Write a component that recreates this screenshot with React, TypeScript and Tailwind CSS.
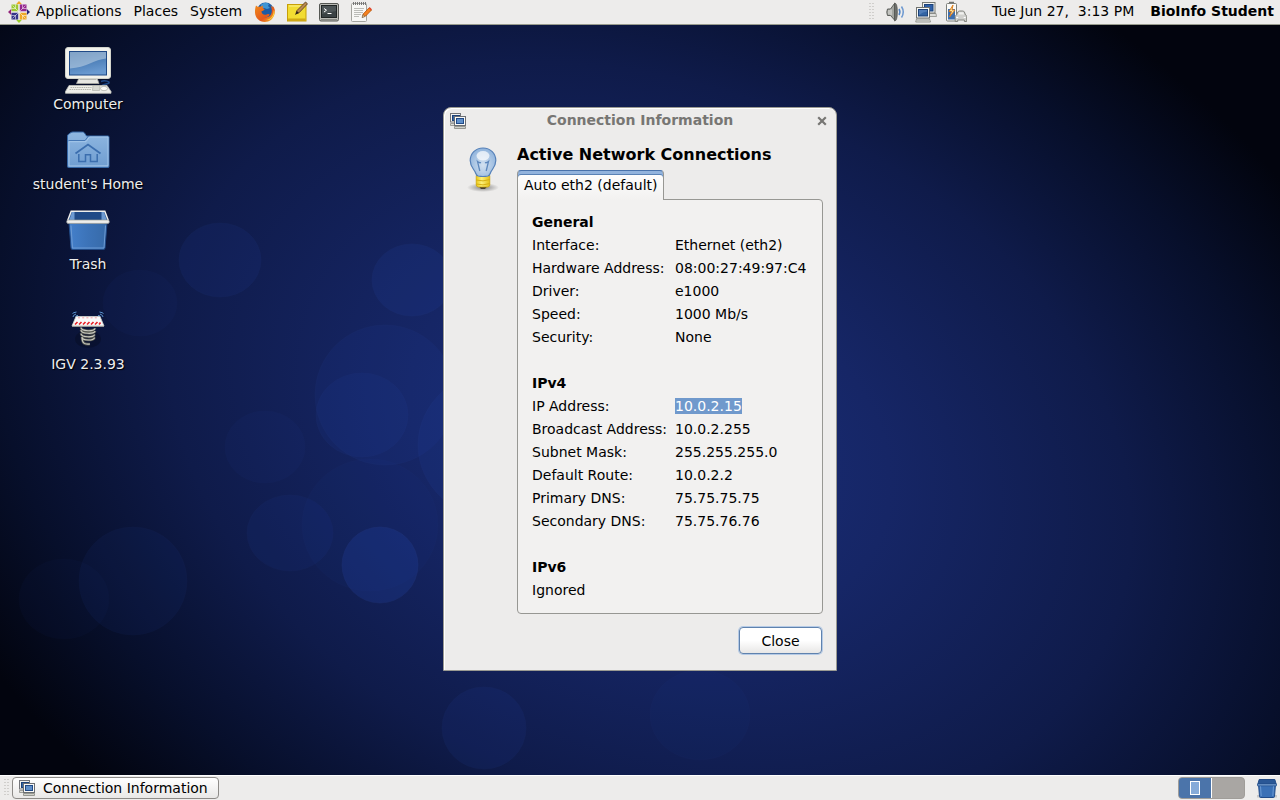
import type { ReactNode } from "react";

function CentosLogo() {
  const quad = (rotate: number, fill: string, dark: string) => (
    <g transform={`rotate(${rotate} 11 11)`}>
      <path d="M11 0 8 3.200h6Z" fill={dark} />
      <path d="M10.500 10.500V3.500H3.500v7Z" fill={fill} />
      <path d="M10.500 10.500 4.500 4.500M7.500 3.500v4h-4" stroke="#fff" strokeWidth=".7" fill="none" opacity=".75" />
    </g>
  );
  return (
    <svg viewBox="0 0 22 22" className="size-[22px]" aria-hidden="true">
      {quad(0, "#9cc832", "#efa724")}
      {quad(90, "#93278f", "#262577")}
      {quad(180, "#efa724", "#9ccd2a")}
      {quad(270, "#35348a", "#932279")}
      <path d="M11 3v16M3 11h16" stroke="#edeceb" strokeWidth="1.200" />
    </svg>
  );
}

function FirefoxIcon() {
  return (
    <svg viewBox="0 0 22 22" className="size-[22px]" aria-hidden="true">
      <defs>
        <linearGradient id="ffFox" x1="0" y1="0" x2="1" y2="1">
          <stop offset="0" stopColor="#f08a1c" />
          <stop offset=".6" stopColor="#e4571b" />
          <stop offset="1" stopColor="#f7c52b" />
        </linearGradient>
      </defs>
      <circle cx="11.500" cy="10" r="8.500" fill="#1c5ba4" />
      <path d="M7 3.500Q11 .5 15 3l-1 2 2 2-3 1-3-1-3 1Z" fill="#3f95d4" />
      <path
        d="M2 4.500 4 6q1.500-.8 3.200-.5L9 4.500 8.700 7l2 1.200-1.500 1.500-1.700.6c0 3 2.500 4 5 3.200 1.500-.5 2.500-.5 3-.1-.5 2-3 2.800-4.500 2.600 4 1 6.500-2 6.800-5.500.2-2.500-.3-4.500-1.300-6l2.500 2-.3-1.800C21 7.500 21.300 10 20.500 13c-1.200 5-5 8-9.700 8C5.500 21 1.200 17 1 11.500.9 8.800 1.300 6.500 2 4.500Z"
        fill="url(#ffFox)"
      />
      <path d="M19.500 9c.7 5-2.500 9.500-7.500 10 5 .8 8.700-3.500 8.500-8.500Z" fill="#fbd33c" />
    </svg>
  );
}

function NotesIcon() {
  return (
    <svg viewBox="0 0 22 22" className="size-[22px]" aria-hidden="true">
      <rect x="1.500" y="3.500" width="18.500" height="16.500" fill="#f2dc32" stroke="#c79f09" />
      <path d="M2 17.500h17.500V20H2Z" fill="#cfa815" />
      <path d="M3 5h15.500" stroke="#fcf08a" />
      <path d="m10 12.500 1-3L19.500 1l2 1.800-8.500 9Z" fill="#b98a52" stroke="#5d4021" strokeWidth=".9" />
      <path d="m9 14 1.800-4 2 1.900Z" fill="#2d2418" />
    </svg>
  );
}

function TerminalIcon() {
  return (
    <svg viewBox="0 0 22 22" className="size-[22px]" aria-hidden="true">
      <rect x="1.500" y="2.500" width="19" height="17.500" rx="1.500" fill="#b9bab5" stroke="#555753" />
      <rect x="3.500" y="4.500" width="15" height="12" fill="#3a4244" stroke="#1f2424" />
      <path d="M4 5h14v5L4 13Z" fill="#5c6668" opacity=".55" />
      <path d="m6 7.500 2.500 1.700L6 11M9.500 12.500h4" stroke="#fff" fill="none" />
      <path d="M3 18.500h16" stroke="#888a85" />
    </svg>
  );
}

function TextEditorIcon() {
  return (
    <svg viewBox="0 0 22 22" className="size-[22px]" aria-hidden="true">
      <rect x="1.500" y="2.500" width="15" height="18" rx="1" fill="#f7f7f5" stroke="#a3a39e" />
      <path d="M3.500 1v3M5.500 1v3M7.500 1v3M9.500 1v3M11.500 1v3M13.500 1v3M15.500 1v3" stroke="#777" />
      <path d="M4 7.500h10M4 9.500h9M4 11.500h9M4 13.500h7M4 15.500h5" stroke="#bbbcb8" />
      <path d="m12.500 16 .7-3 6-6.300 2.400 2.200-6 6.200Z" fill="#f5821f" stroke="#b3520a" strokeWidth=".8" />
      <path d="m12 16.700.9-3.200 2.200 2Z" fill="#e9c896" stroke="#5a4a33" strokeWidth=".5" />
      <path d="m18.800 7.200 1.100-1 2 2-1 1.100Z" fill="#e4432f" />
    </svg>
  );
}

function VolumeIcon() {
  return (
    <svg viewBox="0 0 22 22" className="size-[22px]" aria-hidden="true">
      <path d="M2.500 8h3l4-5.500V19l-4-4.500h-3q-1.500-3.200 0-6.500Z" fill="#a3a5a0" stroke="#5c5e5a" />
      <path d="M6 8.500v5.500M4 9v4.500" stroke="#e5e5e2" />
      <path d="M9.500 2q2.800 0 2.800 9t-2.800 9Z" fill="#6f716d" stroke="#555753" strokeWidth=".8" />
      <path d="M14 8q1.800 3 0 6" stroke="#4f82c2" fill="none" strokeWidth="1.500" />
      <path d="M16.500 5.500q3.500 5.500 0 11" stroke="#6c98d0" fill="none" strokeWidth="1.500" />
    </svg>
  );
}

function NetworkIcon() {
  return (
    <svg viewBox="0 0 22 22" className="size-[22px]" aria-hidden="true">
      <path d="M8 12.500h13l.5 3H8Z" fill="#dededb" stroke="#8b8d88" strokeWidth=".8" />
      <rect x="7.500" y="1.500" width="12.500" height="10.500" fill="#f4f4f2" stroke="#777975" />
      <rect x="9.500" y="3.500" width="8.500" height="6.500" fill="#2f60a8" stroke="#1d4279" />
      <path d="M1.500 18h13l1 3H.7Z" fill="#e4e4e1" stroke="#83857f" strokeWidth=".8" />
      <path d="M2.500 19.500h11" stroke="#999b96" strokeDasharray="1 1" />
      <rect x="1.500" y="6.500" width="13" height="10.500" fill="#f8f8f6" stroke="#70726e" />
      <rect x="3.500" y="8.500" width="9" height="6.500" fill="#3465a4" stroke="#1d4279" />
      <path d="M4 14q4-3.500 8-3.500V9H4Z" fill="#6f98cd" opacity=".5" />
    </svg>
  );
}

function ConnectionIcon() {
  return (
    <svg viewBox="0 0 16 16" className="size-4 shrink-0" aria-hidden="true">
      <rect x=".5" y=".5" width="10" height="8.500" fill="#f4f4f2" stroke="#74767a" />
      <rect x="2.500" y="2.500" width="7" height="5" fill="#3465a4" stroke="#1d4279" />
      <path d="M.5 10.500h5v2h-5Z" fill="#deded9" stroke="#8a8c87" strokeWidth=".8" />
      <path d="M4.500 13.500h11v2h-11Z" fill="#cfd0ca" stroke="#85877f" strokeWidth=".8" />
      <rect x="4.500" y="3.500" width="11" height="9" fill="#fafaf8" stroke="#6b6e72" />
      <rect x="6.500" y="5.500" width="7" height="5" fill="#5f8fc9" stroke="#204a87" />
    </svg>
  );
}

function BatteryIcon() {
  return (
    <svg viewBox="0 0 22 22" className="size-[22px]" aria-hidden="true">
      <path d="M4 1.500h5" stroke="#70726e" strokeWidth="1.500" />
      <rect x="1.500" y="2.500" width="10" height="17.500" rx="1" fill="#fafaf8" stroke="#7d7f7a" />
      <path d="M3 8h7v10.500H3Z" fill="#3d6faf" />
      <path d="M8 4 4 10.500h2.500L4.500 16 10 9H7Z" fill="#fbe9a8" stroke="#dc7b16" strokeWidth=".9" />
      <path
        d="M10.200 20.500v-5.200q.3-1 1.300-1.300l1.300-3q.6-1 1.700-1h3.200q1.200 0 1.700 1l1.100 3q1.100.3 1.200 1.300v5.200h-2.300V19h-6.700v1.500Z"
        fill="#d0d0cd"
        stroke="#858781"
        strokeWidth="1"
      />
      <path d="m13.200 13.500 1-2.300h4l1 2.300Z" fill="#f1f1ef" />
      <path d="M11.200 16.500h2M18.700 16.500h2" stroke="#fff" />
    </svg>
  );
}

function ComputerIcon() {
  return (
    <svg viewBox="0 0 48 48" className="size-12" aria-hidden="true">
      <defs>
        <linearGradient id="screen" x1="0" y1="0" x2=".3" y2="1">
          <stop offset="0" stopColor="#2f639f" />
          <stop offset="1" stopColor="#6a9ad0" />
        </linearGradient>
      </defs>
      <path d="M37 35.500c4-1.500 9 0 8 1.500s-6 .5-7 3" fill="none" stroke="#204a87" strokeWidth="1.500" />
      <path d="M15 32h18l2 5.500H12.500Z" fill="#e6e6e1" stroke="#a9aaa3" strokeWidth=".8" />
      <path d="M16 32h16l.5 1.500h-17Z" fill="#888a85" />
      <rect x="1.500" y="1.500" width="45" height="31" rx="2.500" fill="#f2f2ec" stroke="#d3d4cc" />
      <rect x="5.500" y="5.500" width="37" height="23.500" fill="url(#screen)" stroke="#204a87" />
      <path d="M6 6h36v6.500C31 13.500 22 21.500 6 22.500Z" fill="#c3d5e6" opacity=".55" />
      <path d="M5 39.500h38l4 6v1.800H1.500v-1.800Z" fill="#efefe9" stroke="#c2c3bb" strokeWidth=".8" />
      <path d="M6.500 41.500h21M5.500 43.500h22M28.500 43.500h6.500" stroke="#b5b6ae" strokeDasharray="1.500 .7" />
      <path d="M29 39.500h7l-.5 5h-7Z" fill="#d8d9d2" stroke="#aaaca4" strokeWidth=".6" />
      <ellipse cx="40" cy="42.500" rx="3.500" ry="2.200" fill="#fbfbf8" stroke="#a9aaa2" strokeWidth=".7" />
    </svg>
  );
}

function HomeFolderIcon() {
  return (
    <svg viewBox="0 -1 48 48" className="size-12" aria-hidden="true">
      <defs>
        <linearGradient id="folder" x1="0" y1="0" x2="0" y2="1">
          <stop offset="0" stopColor="#8fb7e1" />
          <stop offset="1" stopColor="#6f9dd0" />
        </linearGradient>
      </defs>
      <path d="M3.500 14V9q0-1 1-1.700L7 5.500q.7-.5 2-.5h9.500q1.300 0 2 1l2 3H44q1 0 1 1v29.500q0 1-1 1H4.500q-1 0-1-1Z" fill="url(#folder)" stroke="#3567a6" />
      <path d="M4.500 13.500h16.500l3.500-4.500" fill="none" stroke="#4678b5" />
      <path d="M5 39V14.700h17L25.500 10H44v28.800Z" fill="none" stroke="#a9c9eb" strokeWidth=".9" />
      <path d="m11.500 26.500 12.500-9 12.500 9" fill="none" stroke="#3b6eae" strokeWidth="1.800" />
      <path d="M14.800 27v7.500h6.700v-6.800h5v6.800h6.700V27" fill="none" stroke="#3b6eae" strokeWidth="1.500" />
    </svg>
  );
}

function TrashIcon() {
  return (
    <svg viewBox="0 -2 48 48" className="size-12" aria-hidden="true">
      <defs>
        <linearGradient id="bin" x1="0" y1="0" x2="1" y2="0">
          <stop offset="0" stopColor="#4480cb" />
          <stop offset=".5" stopColor="#3c73b8" />
          <stop offset="1" stopColor="#376aa8" />
        </linearGradient>
      </defs>
      <path d="M5 15h38l-2 25q-.2 1.500-1.500 1.500h-31Q7.200 41.500 7 40Z" fill="url(#bin)" stroke="#204a87" />
      <path d="M7 17.500 8.500 40H40L41.500 17.500" fill="none" stroke="#6d9bd4" />
      <path d="M7 3.500h34l3 10.500H4Z" fill="#204a87" />
      <path d="M8 4h2.500v9H5Zm32 0h-2.500v9h5.500Z" fill="#6d9ad2" />
      <path d="M3.500 13 7.200 3.200h33.600L44.500 13" fill="none" stroke="#eeeeec" strokeWidth="1.500" />
      <rect x="2.700" y="12" width="42.600" height="3.400" rx="1.500" fill="#eeeeec" stroke="#999b96" strokeWidth=".7" />
    </svg>
  );
}

function PanelTrashIcon() {
  return (
    <svg viewBox="0 0 22 22" className="size-[22px]" aria-hidden="true">
      <path d="M1 18h20v2.500H1Z" fill="#000" opacity=".15" />
      <path d="M2.500 7h17l-1 12.500q-.1 1-1 1h-13q-.9 0-1-1Z" fill="#3a70b6" stroke="#204a87" />
      <path d="M4.500 9 5.200 19M17.500 9 16.800 19" stroke="#6b9ad3" />
      <path d="M3.200 2.500h15.600l1.400 4.800H1.800Z" fill="#2a5796" stroke="#204a87" />
      <path d="M1.500 7h19v1.800h-19Z" fill="#86aedd" stroke="#204a87" strokeWidth=".7" />
    </svg>
  );
}

function SpringIcon() {
  const coil =
    "M17 22.500c0 4 14 4.200 14 .8M17 25c0 4 14 4.500 14 1M17 28.500c0 4 13.500 4.500 13.500 1M18 32c0 4 12.500 4 12.500.5M18 32c0 6.500 2.500 7.500 8 7";
  return (
    <svg viewBox="0 1 48 48" className="size-12" aria-hidden="true">
      <ellipse cx="24" cy="34" rx="13" ry="9" fill="#000" opacity=".2" />
      <path d={coil} fill="none" stroke="#55574f" strokeWidth="2.600" />
      <path d={coil} fill="none" stroke="#c9cac2" strokeWidth="1.100" />
      <path d="M12 11.500h24l4 9.500H8Z" fill="#fafafa" stroke="#d5d5cf" strokeWidth=".8" />
      <path d="M8 21.300h32" stroke="#a5a59f" />
      <path d="M11 19.500 13.500 17m1.500 2.500 2.500-2.500m1.500 2.500 2.500-2.500m1.500 2.500 2.500-2.500m1.500 2.500 2.500-2.500m1.500 2.500 2.500-2.500m1.500 2.500 1.500-2" stroke="#e8242a" strokeWidth="1.700" />
      <path d="M14 12.800h20" stroke="#f2a0a2" strokeDasharray="2 2.200" />
      <path d="M9 12q0-2 3-3M11.500 11.500q.5-1 2.500-1M8.500 8.500q1-1 4-1.500M39 12q0-2-3-3M36.500 11.500q-.5-1-2.500-1M39.500 8.500q-1-1-4-1.500" fill="none" stroke="#5b93cf" />
    </svg>
  );
}

function BulbIcon() {
  return (
    <svg viewBox="0 0 32 48" className="h-12 w-8" aria-hidden="true">
      <defs>
        <radialGradient id="glass" cx=".5" cy=".6" r=".6">
          <stop offset="0" stopColor="#d3e1f0" />
          <stop offset="1" stopColor="#8fb3dc" />
        </radialGradient>
        <radialGradient id="bulbShadow">
          <stop offset="0" stopColor="#000" stopOpacity=".45" />
          <stop offset="1" stopColor="#000" stopOpacity="0" />
        </radialGradient>
        <linearGradient id="cap" x1="0" y1="0" x2="1" y2="0">
          <stop offset="0" stopColor="#ecc914" />
          <stop offset=".4" stopColor="#fdf07a" />
          <stop offset="1" stopColor="#e6c012" />
        </linearGradient>
      </defs>
      <ellipse cx="16" cy="41.500" rx="16" ry="4.500" fill="url(#bulbShadow)" />
      <path d="M12 40.500h8l-2 2.500h-4Z" fill="#4a4030" />
      <path d="M9.200 29.500h13.600v9.500q0 1.500-2 2h-9.600q-2-.5-2-2Z" fill="url(#cap)" stroke="#c9a00a" strokeWidth=".7" />
      <path d="M9 34q7 2 14-.5M9 38q7 2 14-.5" fill="none" stroke="#d6b012" />
      <path d="M16 2C8.500 2 3.200 7.500 3.200 14.500c0 6 3.500 8.500 5 11.500.8 2 1 3.500 3 4q4.800 1 9.600 0c2-.5 2.200-2 3-4 1.500-3 5-5.500 5-11.500C28.800 7.500 23.500 2 16 2Z" fill="url(#glass)" stroke="#5580b8" strokeWidth="1.200" />
      <path d="M12.800 25 10.500 15.500q2 1.800 3.500 1M19.200 25l2.300-9.500q-2 1.800-3.500 1" fill="none" stroke="#5e88bd" strokeWidth="1.300" />
      <ellipse cx="16" cy="9.800" rx="6.500" ry="4.800" fill="#fff" opacity=".7" />
    </svg>
  );
}

function Grip() {
  return (
    <svg viewBox="0 0 6 18" className="h-[18px] w-1.5" aria-hidden="true">
      <path d="M1 0v18M4 0v18" stroke="#b3b1ad" strokeDasharray="1 2" />
    </svg>
  );
}

function Wallpaper() {
  const bubbles = [
    { x: 220, y: 235, rx: 41, ry: 37, o: 0.11 },
    { x: 140, y: 278, rx: 37, ry: 33, o: 0.05 },
    { x: 412, y: 255, rx: 40, ry: 36, o: 0.14 },
    { x: 385, y: 370, rx: 70, ry: 70, o: 0.1 },
    { x: 362, y: 390, rx: 46, ry: 42, o: 0.1 },
    { x: 265, y: 422, rx: 40, ry: 36, o: 0.06 },
    { x: 290, y: 508, rx: 43, ry: 38, o: 0.09 },
    { x: 380, y: 540, rx: 38, ry: 38, o: 0.24 },
    { x: 133, y: 556, rx: 54, ry: 54, o: 0.08 },
    { x: 64, y: 574, rx: 45, ry: 40, o: 0.04 },
    { x: 484, y: 703, rx: 42, ry: 41, o: 0.11 },
    { x: 370, y: 500, rx: 68, ry: 66, o: 0.05 },
    { x: 500, y: 420, rx: 82, ry: 75, o: 0.12 },
    { x: 700, y: 690, rx: 50, ry: 45, o: 0.05 },
  ];
  return (
    <svg viewBox="0 0 1280 750" preserveAspectRatio="none" className="absolute inset-0 size-full" aria-hidden="true">
      <defs>
        <radialGradient id="sky" gradientUnits="userSpaceOnUse" cx="0" cy="0" r="1" gradientTransform="translate(650 415) rotate(22) scale(830 590)">
          <stop offset="0" stopColor="#1a2f7c" />
          <stop offset=".3" stopColor="#162666" />
          <stop offset=".6" stopColor="#0f1b4a" />
          <stop offset=".82" stopColor="#070f2b" />
          <stop offset="1" stopColor="#02040e" />
        </radialGradient>
      </defs>
      <rect width="1280" height="750" fill="url(#sky)" />
      {bubbles.map((b) => (
        <ellipse key={`${b.x}-${b.y}`} cx={b.x} cy={b.y} rx={b.rx} ry={b.ry} fill="#2347ad" stroke="#3a5cc0" strokeOpacity=".5" opacity={b.o} />
      ))}
    </svg>
  );
}

function DesktopItem({ label, children }: { label: string; children: ReactNode }) {
  return (
    <button type="button" className="flex h-20 w-40 flex-col items-center text-sm leading-5 text-[#eeeeec] [text-shadow:1px_1px_1px_#000]">
      {children}
      <span>{label}</span>
    </button>
  );
}

type Section = { title: string; rows: [string, string, boolean?][] };

const sections: Section[] = [
  {
    title: "General",
    rows: [
      ["Interface:", "Ethernet (eth2)"],
      ["Hardware Address:", "08:00:27:49:97:C4"],
      ["Driver:", "e1000"],
      ["Speed:", "1000 Mb/s"],
      ["Security:", "None"],
    ],
  },
  {
    title: "IPv4",
    rows: [
      ["IP Address:", "10.0.2.15", true],
      ["Broadcast Address:", "10.0.2.255"],
      ["Subnet Mask:", "255.255.255.0"],
      ["Default Route:", "10.0.2.2"],
      ["Primary DNS:", "75.75.75.75"],
      ["Secondary DNS:", "75.75.76.76"],
    ],
  },
];

function ConnectionTable({ title, rows }: Section) {
  return (
    <table className="w-full border-collapse text-left">
      <caption className="text-left font-bold">{title}</caption>
      <tbody>
        {rows.map(([name, value, selected]) => (
          <tr key={name}>
            <th scope="row" className="w-[143px] p-0 font-normal whitespace-nowrap">{name}</th>
            <td className="p-0 whitespace-nowrap">
              {selected ? <span className="bg-[#7099cc] text-white">{value}</span> : value}
            </td>
          </tr>
        ))}
      </tbody>
    </table>
  );
}

function ConnectionDialog() {
  return (
    <section
      role="dialog"
      aria-labelledby="dialog-title"
      className="relative flex w-[394px] flex-col rounded-t-lg border border-[#9a9a92] bg-[#edeceb] text-black shadow-[inset_1px_1px_0_#fff]"
    >
      <header className="flex h-[26px] items-center px-1.5">
        <ConnectionIcon />
        <h1 id="dialog-title" className="flex-1 pb-0.5 text-center font-bold text-[#777673]">Connection Information</h1>
        <button type="button" aria-label="Close window" className="flex size-4 items-center justify-center">
          <svg viewBox="0 0 10 10" className="size-2.5" aria-hidden="true">
            <path d="m1.200 1.200 7.600 7.600M8.800 1.200 1.200 8.800" stroke="#777673" strokeWidth="2.200" />
          </svg>
        </button>
      </header>
      <div className="flex gap-[18px] px-[13px] pt-3">
        <div className="pl-[10px]">
          <BulbIcon />
        </div>
        <div className="flex min-w-0 flex-1 flex-col">
          <h2 className="h-6 pt-px text-base leading-4 font-bold">Active Network Connections</h2>
          <div role="tablist" className="z-10 -mb-px flex">
            <button
              type="button"
              role="tab"
              aria-selected="true"
              className="h-[30px] rounded-t border border-t-[#4a73ab] border-x-[#979793] border-b-0 bg-linear-to-b from-white to-[#f2f1f0] px-1.5 pb-px whitespace-nowrap shadow-[inset_0_3px_0_#92b3dd,inset_0_4px_0_#5a82b5]"
            >
              Auto eth2 (default)
            </button>
          </div>
          <div role="tabpanel" className="flex flex-col gap-[23px] rounded-b rounded-tr border border-[#979793] bg-[#f2f1f0] px-3.5 py-[11px] leading-[23px]">
            {sections.map((s) => (
              <ConnectionTable key={s.title} {...s} />
            ))}
            <div>
              <h3 className="font-bold">IPv6</h3>
              <p>Ignored</p>
            </div>
          </div>
        </div>
      </div>
      <footer className="flex justify-end px-3.5 pt-[13px] pb-4">
        <button
          type="button"
          className="h-[27px] w-[83px] rounded border border-[#5f82ae] bg-linear-to-b from-white from-50% to-[#e8e7e6] shadow-[0_0_0_1px_#b5cae5]"
        >
          Close
        </button>
      </footer>
    </section>
  );
}

export default function App() {
  return (
    <div className="flex min-h-screen flex-col bg-black font-['DejaVu_Sans',sans-serif] text-sm leading-5 text-black">
      <header className="flex h-[25px] items-center border-b border-[#989b8d] bg-[#edeceb]">
        <nav className="flex items-center pl-2">
          <CentosLogo />
          <a href="#applications" className="pr-3 pb-0.5 pl-1.5">Applications</a>
          <a href="#places" className="pr-3 pb-0.5">Places</a>
          <a href="#system" className="pr-3 pb-0.5">System</a>
        </nav>
        <div className="flex items-center gap-[10px]">
          <button type="button" aria-label="Firefox"><FirefoxIcon /></button>
          <button type="button" aria-label="Notes"><NotesIcon /></button>
          <button type="button" aria-label="Terminal"><TerminalIcon /></button>
          <button type="button" aria-label="Text editor"><TextEditorIcon /></button>
        </div>
        <div className="ml-auto flex items-center pr-1.5">
          <Grip />
          <div className="flex items-center gap-2 pr-[25px] pl-2.5">
            <button type="button" aria-label="Volume"><VolumeIcon /></button>
            <button type="button" aria-label="Network"><NetworkIcon /></button>
            <button type="button" aria-label="Battery"><BatteryIcon /></button>
          </div>
          <time className="pb-0.5 whitespace-pre">Tue Jun 27,  3:13 PM</time>
          <button type="button" className="pb-0.5 pl-4 font-bold">BioInfo Student</button>
        </div>
      </header>

      <main className="relative flex flex-1 items-start justify-center pt-[82px] pb-[104px]">
        <Wallpaper />
        <div className="absolute top-[21px] left-2 flex flex-col">
          <DesktopItem label="Computer"><ComputerIcon /></DesktopItem>
          <DesktopItem label="student's Home"><HomeFolderIcon /></DesktopItem>
          <DesktopItem label="Trash"><TrashIcon /></DesktopItem>
          <div className="pt-5">
            <DesktopItem label="IGV 2.3.93"><SpringIcon /></DesktopItem>
          </div>
        </div>
        <ConnectionDialog />
      </main>

      <footer className="flex h-[25px] items-center border-t border-white bg-[#edeceb] pr-0.5 pl-1">
        <Grip />
        <button
          type="button"
          className="ml-0.5 flex h-[22px] w-[207px] items-center gap-2 rounded border border-[#8d8b88] bg-linear-to-b from-white to-[#e9e8e7] px-1.5"
        >
          <ConnectionIcon />
          <span className="pb-px">Connection Information</span>
        </button>
        <div className="ml-auto flex h-[22px] w-[67px] overflow-hidden rounded border border-[#a09d99] bg-[#a9a6a3]">
          <button type="button" aria-label="Workspace 1" className="flex w-[33px] items-center justify-center border-r border-white bg-[#4b74aa]">
            <span className="h-3.5 w-2.5 border border-white bg-[#86abd9]" />
          </button>
          <button type="button" aria-label="Workspace 2" className="flex-1" />
        </div>
        <button type="button" aria-label="Trash" className="ml-[11px]">
          <PanelTrashIcon />
        </button>
      </footer>
    </div>
  );
}
